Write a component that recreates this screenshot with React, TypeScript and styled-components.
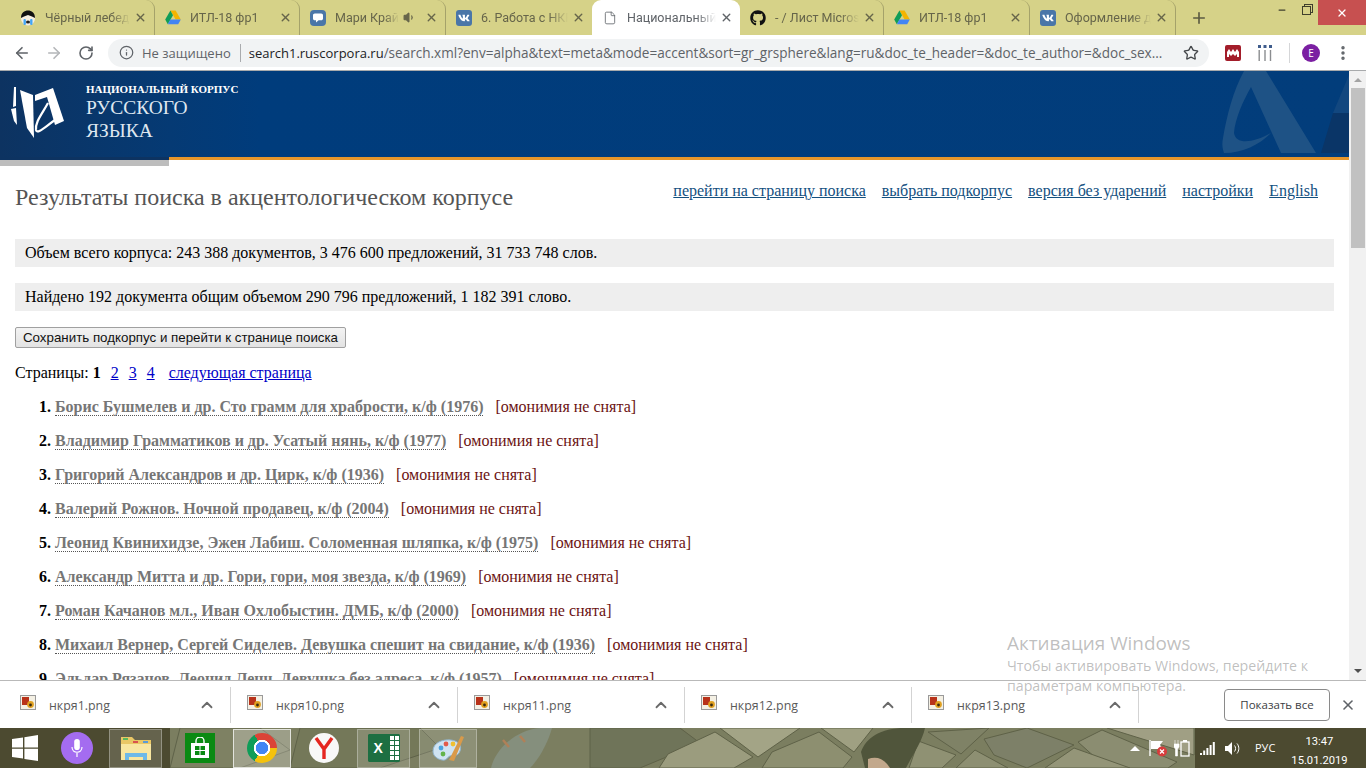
import React from 'react';
import styled, { createGlobalStyle } from 'styled-components';
import { FaGithub, FaVk } from 'react-icons/fa';
import {
  ArrowLeft,
  ArrowRight,
  ChevronUp,
  EllipsisVertical,
  File,
  Info,
  Minus,
  Plus,
  RotateCw,
  Star,
  Volume1,
  X
} from 'lucide-react';

const UI_FONT = '"Open Sans", "Noto Sans", sans-serif';
const TAB_FONT = 'Roboto, "Noto Sans", sans-serif';
const SERIF = '"Liberation Serif", "Times New Roman", serif';

const GlobalStyle = createGlobalStyle`
  html, body { margin: 0; padding: 0; height: 100%; overflow: hidden; background: #fff; }
  * { box-sizing: border-box; }
`;

const Screen = styled.div`
  position: relative;
  width: 1366px;
  height: 768px;
  display: flex;
  flex-direction: column;
  overflow: hidden;
  font-family: ${SERIF};
`;

/* browser chrome */
const TabStrip = styled.div`
  height: 35px;
  flex: none;
  display: flex;
  padding-left: 10px;
  background: #d6d288;
  position: relative;
`;

const TabCell = styled.div<{ $active?: boolean; $width: number; $divider?: boolean }>`
  width: ${(p) => p.$width}px;
  height: 35px;
  flex: none;
  display: flex;
  align-items: center;
  padding: 0 7px 0 10px;
  gap: 9px;
  position: relative;
  border-radius: 9px 9px 0 0;
  background: ${(p) => (p.$active ? '#fff' : 'transparent')};
  color: ${(p) => (p.$active ? '#5f6368' : '#66654a')};
  border-right: ${(p) => (p.$divider ? '1px solid #a5a26a' : '0')};
  background-clip: padding-box;
`;

const TabTitle = styled.span`
  flex: 1;
  min-width: 0;
  margin-right: -5px;
  font: 12.5px/16px ${TAB_FONT};
  white-space: nowrap;
  overflow: hidden;
  -webkit-mask-image: linear-gradient(to right, #000 78%, transparent 100%);
  mask-image: linear-gradient(to right, #000 78%, transparent 100%);
`;

const FaviconSlot = styled.span`
  width: 16px;
  height: 16px;
  flex: none;
  display: flex;
  align-items: center;
  justify-content: center;
`;

const VkBadge = styled.span`
  width: 16px;
  height: 16px;
  border-radius: 3px;
  background: #4a76a8;
  color: #fff;
  display: flex;
  align-items: center;
  justify-content: center;
`;

const NewTab = styled.div`
  width: 46px;
  height: 35px;
  display: flex;
  align-items: center;
  justify-content: center;
  color: #5c5b42;
`;

const WindowControls = styled.div`
  position: absolute;
  top: 0;
  right: 0;
  display: flex;
  height: 25px;
`;

const WindowButton = styled.div<{ $close?: boolean; $width: number }>`
  width: ${(p) => p.$width}px;
  height: ${(p) => (p.$close ? 25 : 20)}px;
  display: flex;
  align-items: center;
  justify-content: center;
  background: ${(p) => (p.$close ? '#c75050' : 'transparent')};
  color: ${(p) => (p.$close ? '#fff' : '#3f3f2c')};
`;

const MaxIcon = styled.span`
  width: 9px;
  height: 9px;
  border: 1px solid #3f3f2c;
  box-shadow: 2px -2px 0 -1px #d6d288, 2px -2px 0 0 #3f3f2c;
`;

const Toolbar = styled.div`
  height: 35px;
  flex: none;
  display: flex;
  align-items: center;
  background: #fff;
  padding: 0 0 0 12px;
`;

const NavIcon = styled.span<{ $muted?: boolean }>`
  width: 20px;
  height: 20px;
  margin-right: 12px;
  display: flex;
  align-items: center;
  justify-content: center;
  color: ${(p) => (p.$muted ? '#b4b6b9' : '#5f6368')};
`;

const Omnibox = styled.div`
  width: 1101px;
  height: 28px;
  flex: none;
  display: flex;
  align-items: center;
  padding: 0 10px 0 11px;
  border-radius: 14px;
  background: #f1f3f4;
  font: 13px/18px ${UI_FONT};
  white-space: nowrap;
`;

const SecurityLabel = styled.span`
  color: #5f6368;
  margin-left: 8px;
`;

const OmniDivider = styled.span`
  width: 1px;
  height: 18px;
  margin: 0 8px 0 9px;
  background: #a9abae;
`;

const UrlHost = styled.span`
  color: #202124;
`;

const UrlPath = styled.span`
  flex: 1;
  color: #5f6368;
  font-size: 13.55px;
  overflow: hidden;
`;

const ToolbarTools = styled.div`
  display: flex;
  align-items: center;
  margin-left: 16px;
  flex: 1;
`;

const ToolDivider = styled.span`
  width: 1px;
  height: 20px;
  margin: 0 12px 0 16px;
  background: #d5d6d8;
`;

const ProfileBadge = styled.span`
  width: 18px;
  height: 18px;
  border-radius: 50%;
  background: #7b1fa2;
  color: #fff;
  font: 10px/18px ${UI_FONT};
  text-align: center;
`;

const ExtensionBadge = styled.span`
  width: 16px;
  height: 16px;
  border-radius: 2px;
  background: #a31d2a;
  margin-right: 16px;
  display: flex;
  align-items: center;
  justify-content: center;
`;

/* page */
const Viewport = styled.div`
  height: 610px;
  flex: none;
  display: flex;
  border-top: 1px solid #a8aaac;
  overflow: hidden;
`;

const Page = styled.main`
  width: 1349px;
  flex: none;
  color: #000;
  font: 16px/18px ${SERIF};
`;

const Banner = styled.header`
  position: relative;
  height: 86px;
  display: flex;
  overflow: hidden;
  background: linear-gradient(to right, #0d3361 0, #053a74 170px, #003c7c 260px, #023d7b 100%);
`;

const BannerMark = styled.svg`
  width: 80px;
  height: 70px;
  margin-top: 5px;
  flex: none;
`;

const BannerWatermark = styled.svg`
  position: absolute;
  right: 0;
  top: 0;
  width: 130px;
  height: 86px;
`;

const BannerTitle = styled.div`
  margin: 11px 0 0 6px;
  color: #fff;
  display: flex;
  flex-direction: column;
`;

const BannerSmall = styled.span`
  font: bold 11px/14px ${SERIF};
`;

const BannerLarge = styled.span`
  font: 19.5px/23px ${SERIF};
  color: #dfe7f0;
`;

const Stripe = styled.div`
  display: flex;
  align-items: flex-start;
`;

const StripeLeft = styled.div`
  width: 169px;
  height: 9px;
  background: linear-gradient(#0d3361 3px, #bdbdbd 3px);
`;

const StripeRight = styled.div`
  flex: 1;
  height: 3px;
  background: #e7962a;
`;

const Content = styled.div`
  padding: 0 15px;
`;

const TitleRow = styled.div`
  height: 73px;
  display: flex;
  justify-content: space-between;
  align-items: flex-start;
`;

const Title = styled.h1`
  margin: 18px 0 0;
  font: normal 24px/26px ${SERIF};
  color: #555;
`;

const TopNav = styled.nav`
  display: flex;
  gap: 16px;
  margin: 16px 16px 0 0;
`;

const TopLink = styled.a`
  color: #13507f;
  text-decoration: underline;
`;

const StatBox = styled.div`
  height: 28px;
  margin-bottom: 16px;
  padding: 5px 10px;
  background: #eee;
`;

const SaveButton = styled.button`
  display: block;
  width: 331px;
  height: 21px;
  padding: 0;
  border: 1px solid #a0a0a0;
  border-radius: 2px;
  background: linear-gradient(#f3f3f3, #e3e3e3);
  color: #111;
  font: 13.33px/18px "Liberation Sans", Arial, sans-serif;
`;

const Pager = styled.div`
  margin: 16px 0 8px;
  display: flex;
  align-items: baseline;
`;

const PagerCurrent = styled.b`
  margin: 0 10px 0 4px;
`;

const PagerLink = styled.a`
  color: #0000c8;
  text-decoration: underline;
  margin-right: 10px;
`;

const NextLink = styled(PagerLink)`
  margin-left: 4px;
`;

const DocList = styled.ol`
  list-style: none;
  margin: 0;
  padding: 0;
`;

const DocRow = styled.li`
  height: 34px;
  display: flex;
  align-items: center;
`;

const DocNumber = styled.b`
  width: 36px;
  text-align: right;
  margin-right: 4px;
  flex: none;
`;

const DocTitle = styled.a`
  font-weight: bold;
  color: #767676;
  border-bottom: 1px dotted #555;
  line-height: 16px;
`;

const DocNote = styled.span`
  margin-left: 12px;
  color: #6b1212;
`;

const Scrollbar = styled.div`
  width: 17px;
  flex: none;
  background: #f1f1f1;
  display: flex;
  flex-direction: column;
  align-items: center;
`;

const ScrollArrow = styled.span<{ $down?: boolean }>`
  margin-top: ${(p) => (p.$down ? 'auto' : '7px')};
  margin-bottom: ${(p) => (p.$down ? '7px' : '0')};
  width: 0;
  height: 0;
  border-left: 4px solid transparent;
  border-right: 4px solid transparent;
  border-bottom: ${(p) => (p.$down ? '0' : '4px solid #a3a3a3')};
  border-top: ${(p) => (p.$down ? '4px solid #505050' : '0')};
`;

const ScrollThumb = styled.span`
  width: 14px;
  height: 160px;
  margin-top: 6px;
  background: #c1c1c1;
`;

/* downloads */
const DownloadBar = styled.footer`
  height: 48px;
  flex: none;
  display: flex;
  align-items: center;
  background: #fff;
  border-top: 1px solid #b9b9b9;
  padding-left: 4px;
`;

const DownloadItem = styled.div`
  width: 227px;
  height: 36px;
  flex: none;
  display: flex;
  align-items: center;
  padding: 0 14px 0 16px;
  border-right: 1px solid #d3d3d3;
  color: #5a5a5a;
`;

const FileName = styled.span`
  flex: 1;
  margin: 2px 0 0 13px;
  font: 12.4px/16px ${UI_FONT};
`;

const ImageGlyph = styled.svg`
  width: 16px;
  height: 15px;
  flex: none;
  margin-top: -4px;
`;

const ShowAll = styled.button`
  width: 106px;
  height: 32px;
  margin-left: 85px;
  padding: 0;
  border: 1px solid #8a8a8a;
  border-radius: 4px;
  background: #fff;
  color: #3c4043;
  font: 11.5px/16px ${UI_FONT};
`;

const BarClose = styled.span`
  width: 36px;
  display: flex;
  justify-content: center;
  color: #5f6368;
`;

/* windows taskbar */
const Taskbar = styled.div`
  position: relative;
  height: 40px;
  flex: none;
  display: flex;
  align-items: center;
  overflow: hidden;
  background: #7b7e60;
`;

const Pavement = styled.svg`
  position: absolute;
  inset: 0;
  width: 1366px;
  height: 40px;
`;

const TaskSide = styled.div<{ $width: number }>`
  position: relative;
  width: ${(p) => p.$width}px;
  height: 40px;
  flex: none;
  display: flex;
  align-items: center;
  background: rgb(76, 74, 48);
`;

const TaskMiddle = styled.div`
  position: relative;
  flex: 1;
  height: 40px;
  display: flex;
  align-items: center;
`;

const StartSlot = styled.svg`
  width: 26px;
  height: 26px;
  margin: 0 23px 0 12px;
`;

const Cortana = styled.span`
  width: 32px;
  height: 32px;
  border-radius: 50%;
  background: #a46cf0;
  color: #fff;
  margin-right: 16px;
  display: flex;
  align-items: center;
  justify-content: center;
`;

const TaskTile = styled.div<{ $width: number; $strong?: boolean; $offset?: number }>`
  width: ${(p) => p.$width}px;
  height: 39px;
  margin-left: ${(p) => p.$offset ?? 0}px;
  flex: none;
  display: flex;
  align-items: center;
  justify-content: center;
  background: rgba(255, 255, 255, ${(p) => (p.$strong ? 0.25 : 0.14)});
  border: 1px solid rgba(255, 255, 255, ${(p) => (p.$strong ? 0.7 : 0.3)});
`;

const ChromeBall = styled.span`
  width: 30px;
  height: 30px;
  border-radius: 50%;
  background:
    radial-gradient(circle, #4285f4 0 6px, #fff 6.5px 8px, transparent 8.5px),
    conic-gradient(#db4437 0 90deg, #f4c20d 90deg 210deg, #0f9d58 210deg 330deg, #db4437 330deg);
`;

const YandexBall = styled.span`
  width: 30px;
  height: 30px;
  margin: 0 18px;
  border-radius: 50%;
  background: #f8f8f8;
  display: flex;
  align-items: center;
  justify-content: center;
`;

const StoreSquare = styled.span`
  width: 30px;
  height: 30px;
  margin-left: 15px;
  margin-right: 18px;
  background: #0a8a12;
  display: flex;
  align-items: center;
  justify-content: center;
`;

const ExcelMark = styled.span`
  width: 32px;
  height: 28px;
  border-radius: 1px;
  background:
    linear-gradient(to right, #1d6f42 0 20px, transparent 20px),
    repeating-linear-gradient(#1d6f42 0 1px, transparent 1px 5px),
    repeating-linear-gradient(to right, #1d6f42 0 1px, #fff 1px 5px);
  border: 1px solid #1d6f42;
  color: #fff;
  font: bold 14px/26px "Liberation Sans", sans-serif;
  padding-left: 5px;
`;

const TraySlot = styled.div`
  position: absolute;
  right: 5px;
  top: 0;
  height: 40px;
  display: flex;
  align-items: center;
  gap: 6px;
`;

const TrayIcons = styled.div`
  width: 171px;
  height: 40px;
  display: flex;
  align-items: center;
  padding-left: 5px;
  gap: 10px;
  color: #fff;
`;

const TrayLang = styled.span`
  margin-left: 3px;
  font: 11px/16px ${UI_FONT};
`;

const TrayClock = styled.span`
  margin: 5px 0 0 6px;
  color: #fff;
  font: 11.2px/19px ${TAB_FONT};
  text-align: center;
  display: flex;
  flex-direction: column;
`;

/* activation overlay */
const Activation = styled.div`
  position: absolute;
  left: 1007px;
  top: 630px;
  width: 340px;
  color: rgba(120, 120, 120, 0.48);
  font: 14.2px/20px ${UI_FONT};
  pointer-events: none;
  white-space: nowrap;
`;

const ActivationTitle = styled.div`
  font-size: 18.9px;
  line-height: 26px;
`;

const DriveIcon = () => (
  <svg width="16" height="15" viewBox="0 0 16 15">
    <path d="M5.4 0.5h5.2l5.2 9h-5.2z" fill="#f4b400" />
    <path d="M5.4 0.5L0.2 9.5l2.6 4.8 5.2-9z" fill="#0f9d58" />
    <path d="M2.8 14.3h10.4l2.6-4.8H5.4z" fill="#4285f4" />
  </svg>
);

const FaceIcon = () => (
  <svg width="16" height="16" viewBox="0 0 16 16">
    <circle cx="8" cy="8.5" r="7" fill="#f6eee0" />
    <path d="M1 8C1 2.5 4.5 0.5 8 0.5s7 2 7 7.5L12 6.5 8 5 4 6.5z" fill="#111" />
    <rect x="3.5" y="9" width="2.4" height="6" rx="1" fill="#42a5f5" />
    <rect x="10.1" y="9" width="2.4" height="6" rx="1" fill="#42a5f5" />
    <ellipse cx="8" cy="12" rx="2" ry="1.6" fill="#222" />
  </svg>
);

const MessengerIcon = () => (
  <svg width="16" height="16" viewBox="0 0 16 16">
    <rect width="16" height="16" rx="4" fill="#4a76a8" />
    <path d="M4.8 3.5h6.4c1 0 1.8.8 1.8 1.8v3.2c0 1-.8 1.8-1.8 1.8H8.6L6 12.5v-2.2H4.8C3.8 10.3 3 9.5 3 8.5V5.3c0-1 .8-1.8 1.8-1.8z" fill="#fff" />
  </svg>
);

const VkIcon = () => (
  <VkBadge>
    <FaVk size={12} />
  </VkBadge>
);

const CloseIcon = () => <X size={13} strokeWidth={2.6} style={{ flex: 'none' }} />;

interface TabData {
  title: string;
  icon: React.ReactNode;
  width: number;
  active?: boolean;
  divider?: boolean;
  audio?: boolean;
}

const tabs: TabData[] = [
  { title: 'Чёрный лебедь', icon: <FaceIcon />, width: 145, divider: true },
  { title: 'ИТЛ-18 фр1', icon: <DriveIcon />, width: 145, divider: true },
  { title: 'Мари Край', icon: <MessengerIcon />, width: 146, divider: true, audio: true },
  { title: '6. Работа с НКРЯ', icon: <VkIcon />, width: 146 },
  { title: 'Национальный', icon: <File size={14} strokeWidth={1.4} />, width: 148, active: true },
  { title: '- / Лист Microsoft', icon: <FaGithub size={16} color="#111" />, width: 144, divider: true },
  { title: 'ИТЛ-18 фр1', icon: <DriveIcon />, width: 146, divider: true },
  { title: 'Оформление д', icon: <VkIcon />, width: 146, divider: true }
];

const docs = [
  'Борис Бушмелев и др. Сто грамм для храбрости, к/ф (1976)',
  'Владимир Грамматиков и др. Усатый нянь, к/ф (1977)',
  'Григорий Александров и др. Цирк, к/ф (1936)',
  'Валерий Рожнов. Ночной продавец, к/ф (2004)',
  'Леонид Квинихидзе, Эжен Лабиш. Соломенная шляпка, к/ф (1975)',
  'Александр Митта и др. Гори, гори, моя звезда, к/ф (1969)',
  'Роман Качанов мл., Иван Охлобыстин. ДМБ, к/ф (2000)',
  'Михаил Вернер, Сергей Сиделев. Девушка спешит на свидание, к/ф (1936)',
  'Эльдар Рязанов, Леонид Ленч. Девушка без адреса, к/ф (1957)'
];

const downloads = ['нкря1.png', 'нкря10.png', 'нкря11.png', 'нкря12.png', 'нкря13.png'];

const navLinks = [
  'перейти на страницу поиска',
  'выбрать подкорпус',
  'версия без ударений',
  'настройки',
  'English'
];

// wallpaper paving stones behind the taskbar
const stones = [
  { points: '180,0 260,0 290,22 240,40 170,40', fill: '#7e8163' },
  { points: '300,0 420,0 440,20 380,40 290,40', fill: '#747859' },
  { points: '590,0 680,0 700,15 640,40 590,40', fill: '#6f7459' },
  { points: '668,26 715,4 753,29 734,40 659,40', fill: '#9b9c7e' },
  { points: '720,0 800,0 758,29', fill: '#a3a486' },
  { points: '772,24 819,4 852,29 843,40 762,40', fill: '#8d8f70' },
  { points: '821,0 873,0 854,24', fill: '#9fa082' },
  { points: '913,11 956,27 942,40 909,40 918,14', fill: '#8f9173' },
  { points: '928,4 989,0 961,26', fill: '#7f8266' },
  { points: '984,11 1027,0 1074,17 1027,40 994,27', fill: '#7d8068' },
  { points: '1078,14 1102,2 1177,34 1168,40 1107,40', fill: '#8b8d71' },
  { points: '1107,0 1194,0 1194,27', fill: '#a09f84' },
  { points: '956,40 975,22 1008,40', fill: '#8d8f72' },
  { points: '1045,40 1074,20 1130,40', fill: '#949578' }
];

export default function App() {
  return (
    <Screen>
      <GlobalStyle />

      <TabStrip>
        {tabs.map((tab) => (
          <TabCell key={tab.title + tab.width} $width={tab.width} $active={tab.active} $divider={tab.divider}>
            <FaviconSlot>{tab.icon}</FaviconSlot>
            <TabTitle>{tab.title}</TabTitle>
            {tab.audio && <Volume1 size={13} fill="currentColor" />}
            <CloseIcon />
          </TabCell>
        ))}
        <NewTab>
          <Plus size={18} strokeWidth={2.2} />
        </NewTab>
        <WindowControls>
          <WindowButton $width={24}>
            <Minus size={10} strokeWidth={3} />
          </WindowButton>
          <WindowButton $width={24}>
            <MaxIcon />
          </WindowButton>
          <WindowButton $width={48} $close>
            <X size={12} strokeWidth={2.6} />
          </WindowButton>
        </WindowControls>
      </TabStrip>

      <Toolbar>
        <NavIcon>
          <ArrowLeft size={18} strokeWidth={2.2} />
        </NavIcon>
        <NavIcon $muted>
          <ArrowRight size={18} strokeWidth={2.2} />
        </NavIcon>
        <NavIcon>
          <RotateCw size={16} strokeWidth={2.4} />
        </NavIcon>
        <Omnibox>
          <Info size={15} color="#5f6368" strokeWidth={2} />
          <SecurityLabel>Не защищено</SecurityLabel>
          <OmniDivider />
          <UrlHost>search1.ruscorpora.ru</UrlHost>
          <UrlPath>/search.xml?env=alpha&amp;text=meta&amp;mode=accent&amp;sort=gr_grsphere&amp;lang=ru&amp;doc_te_header=&amp;doc_te_author=&amp;doc_sex...</UrlPath>
          <Star size={16} color="#44474a" strokeWidth={2} />
        </Omnibox>
        <ToolbarTools>
          <ExtensionBadge>
            <svg width="12" height="8" viewBox="0 0 12 8">
              <path d="M0 8V3l2-3 2 3 2-3 2 3 2-3 2 3v5h-2V5L8 7 6 5 4 7 2 5v3z" fill="#fff" />
            </svg>
          </ExtensionBadge>
          <svg width="16" height="18" viewBox="0 0 16 18">
            <g fill="#3f5c8c">
              <rect x="1" y="1" width="3" height="3" />
              <rect x="6.5" y="1" width="3" height="3" />
              <rect x="12" y="1" width="3" height="3" />
            </g>
            <g fill="#8b8d90">
              <rect x="1.5" y="6" width="1.4" height="11" />
              <rect x="7.3" y="6" width="1.4" height="11" />
              <rect x="12.8" y="6" width="1.4" height="11" />
            </g>
          </svg>
          <ToolDivider />
          <ProfileBadge>E</ProfileBadge>
          <EllipsisVertical size={18} color="#5f6368" strokeWidth={2.6} style={{ marginLeft: 14 }} />
        </ToolbarTools>
      </Toolbar>

      <Viewport>
        <Page>
          <Banner>
            <BannerMark viewBox="0 0 80 70">
              <path d="M14 11l2 0 0 19-3 1zM11 33l5-1 1 17-3-4z" fill="#fff" />
              <path d="M20 14l13 5 1 43-7-10z" fill="#fff" />
              <path d="M35 19L53 12 64 45 55 49 47 21 35 25z" fill="#fff" />
              <path d="M48 27C42 38 35 46 36 54C37 59 46 50 55 44" stroke="#fff" strokeWidth="2.2" fill="none" />
            </BannerMark>
            <BannerTitle>
              <BannerSmall>НАЦИОНАЛЬНЫЙ КОРПУС</BannerSmall>
              <BannerLarge>РУССКОГО</BannerLarge>
              <BannerLarge>ЯЗЫКА</BannerLarge>
            </BannerTitle>
            <BannerWatermark viewBox="0 0 130 86">
              <path d="M25 0H47L97 82H62L32 16C24 30 16 48 15 62C17 74 34 72 52 62C40 74 24 82 5 82C3 76 3 72 4 67C8 44 14 20 25 0Z" fill="#1e5285" />
              <path d="M130 4L114 42H130z" fill="#12477f" />
              <path d="M114 42H130V82H102z" fill="#0a3567" />
            </BannerWatermark>
          </Banner>
          <Stripe>
            <StripeLeft />
            <StripeRight />
          </Stripe>

          <Content>
            <TitleRow>
              <Title>Результаты поиска в акцентологическом корпусе</Title>
              <TopNav>
                {navLinks.map((label) => (
                  <TopLink key={label}>{label}</TopLink>
                ))}
              </TopNav>
            </TitleRow>

            <StatBox>Объем всего корпуса: 243 388 документов, 3 476 600 предложений, 31 733 748 слов.</StatBox>
            <StatBox>Найдено 192 документа общим объемом 290 796 предложений, 1 182 391 слово.</StatBox>

            <SaveButton>Сохранить подкорпус и перейти к странице поиска</SaveButton>

            <Pager>
              Страницы:
              <PagerCurrent>1</PagerCurrent>
              <PagerLink>2</PagerLink>
              <PagerLink>3</PagerLink>
              <PagerLink>4</PagerLink>
              <NextLink>следующая страница</NextLink>
            </Pager>

            <DocList>
              {docs.map((doc, i) => (
                <DocRow key={doc}>
                  <DocNumber>{i + 1}.</DocNumber>
                  <DocTitle>{doc}</DocTitle>
                  <DocNote>[омонимия не снята]</DocNote>
                </DocRow>
              ))}
            </DocList>
          </Content>
        </Page>
        <Scrollbar>
          <ScrollArrow />
          <ScrollThumb />
          <ScrollArrow $down />
        </Scrollbar>
      </Viewport>

      <DownloadBar>
        {downloads.map((name) => (
          <DownloadItem key={name}>
            <ImageGlyph viewBox="0 0 16 15">
              <rect x="0.5" y="0.5" width="15" height="14" fill="#f4f0e4" stroke="#9a9a9a" />
              <rect x="2" y="2" width="7" height="8" fill="#b8321a" />
              <circle cx="10.5" cy="9.5" r="3.4" fill="#e0a020" />
              <circle cx="10.5" cy="10" r="1.4" fill="#3a2a10" />
            </ImageGlyph>
            <FileName>{name}</FileName>
            <ChevronUp size={18} color="#6a6a6a" strokeWidth={2.4} />
          </DownloadItem>
        ))}
        <ShowAll>Показать все</ShowAll>
        <BarClose>
          <X size={16} strokeWidth={2.4} />
        </BarClose>
      </DownloadBar>

      <Taskbar>
        <Pavement viewBox="0 0 1366 40">
          {stones.map((stone) => (
            <polygon key={stone.points} points={stone.points} fill={stone.fill} stroke="#5f6248" strokeWidth="1" />
          ))}
          {/* shoe and sandal in the wallpaper */}
          <path d="M491 40C495 22 515 2 540 0H552C548 14 540 30 530 40z" fill="#858f7d" />
          <path d="M503 12L509 19M520 8L525 14" stroke="#b08058" strokeWidth="2.5" />
          <path d="M861 24C866 10 880 0 905 0H925C922 14 912 28 906 40H865z" fill="#50553b" />
          <path d="M868 31C876 28 884 30 890 40H868z" fill="#c2a88c" />
        </Pavement>

        <TaskSide $width={170}>
          <StartSlot viewBox="0 0 26 26">
            <path d="M0 4l11-1.6V12.4H0zM12.4 2.2L26 0v12.4H12.4zM0 13.8h11v9.8L0 22zM12.4 13.8H26V26l-13.6-2z" fill="#fff" />
          </StartSlot>
          <Cortana>
            <svg width="12" height="20" viewBox="0 0 12 20">
              <rect x="3.2" y="1" width="5.6" height="11" rx="2.8" fill="#fff" />
              <path d="M1 9c0 7 10 7 10 0M6 15v4" stroke="#fff" strokeWidth="1.2" fill="none" />
            </svg>
          </Cortana>
          <TaskTile $width={53}>
            <svg width="32" height="28" viewBox="0 0 32 28">
              <path d="M1 3h11l3 3h16v20H1z" fill="#e9c766" />
              <path d="M1 10h30v16H1z" fill="#f8e6a0" />
              <rect x="3" y="4" width="5" height="2" fill="#5cb85c" />
              <rect x="13" y="7" width="5" height="2" fill="#d9534f" />
              <rect x="23" y="7" width="5" height="2" fill="#5b9bd5" />
              <path d="M5 26v-7h22v7h-4v-3H9v3z" fill="#6db9e8" />
            </svg>
          </TaskTile>
        </TaskSide>

        <TaskMiddle>
          <StoreSquare>
            <svg width="20" height="22" viewBox="0 0 20 22">
              <path d="M6 6V4a4 4 0 0 1 8 0v2" stroke="#fff" fill="none" strokeWidth="1.4" />
              <path d="M1 6h18v15H1z" fill="#fff" />
              <path d="M5 9h4.5v4H5zM10.5 9H15v4h-4.5zM5 14h4.5v4H5zM10.5 14H15v4h-4.5z" fill="#0a8a12" />
            </svg>
          </StoreSquare>
          <TaskTile $width={58} $strong>
            <ChromeBall />
          </TaskTile>
          <YandexBall>
            <svg width="20" height="24" viewBox="0 0 20 24">
              <path d="M2 2l8 11 8-11M10 13v10" stroke="#e52620" strokeWidth="3.4" fill="none" />
            </svg>
          </YandexBall>
          <TaskTile $width={53}>
            <ExcelMark>X</ExcelMark>
          </TaskTile>
          <TaskTile $width={58} $offset={9}>
            <svg width="34" height="30" viewBox="0 0 34 30">
              <path d="M2 18C2 10 11 6 20 7c8 1 11 6 9 11-2 6-7 4-10 5-3 1-3 5-8 4-5-1-9-4-9-9z" fill="#cfe3f2" stroke="#8fb3cc" />
              <circle cx="10" cy="15" r="2.4" fill="#4aa3df" />
              <circle cx="15" cy="11" r="2.4" fill="#e25b4a" />
              <circle cx="22" cy="11" r="2.4" fill="#f0c030" />
              <circle cx="12" cy="21" r="2.4" fill="#63b34a" />
              <path d="M18 27L30 3l3 1-10 24z" fill="#d99a4a" />
            </svg>
          </TaskTile>
          <TraySlot>
            <svg width="10" height="6" viewBox="0 0 10 6" style={{ marginRight: 2 }}>
              <path d="M0 6l5-5 5 5z" fill="#fff" />
            </svg>
            <svg width="20" height="18" viewBox="0 0 20 18">
              <path d="M2 1v16" stroke="#fff" strokeWidth="1.4" />
              <path d="M3 2h12l-3 4 3 4H3z" fill="#fff" />
              <circle cx="14" cy="12.5" r="5" fill="#d83b3b" />
              <path d="M12 10.5l4 4m0-4l-4 4" stroke="#fff" strokeWidth="1.2" />
            </svg>
            <svg width="16" height="18" viewBox="0 0 16 18">
              <path d="M1 1v4M4 1v4M0 5h5v3L3.5 10v7h-2v-7L0 8z" fill="#fff" stroke="#fff" strokeWidth="0.6" />
              <rect x="7" y="3" width="8" height="14" fill="none" stroke="#fff" strokeWidth="1.3" />
              <rect x="9" y="1" width="4" height="2" fill="#fff" />
            </svg>
          </TraySlot>
        </TaskMiddle>

        <TaskSide $width={171}>
          <TrayIcons>
            <svg width="15" height="13" viewBox="0 0 15 13">
              <path d="M0 11h2v2H0zM3.2 8.5h2V13h-2zM6.4 6h2v7h-2zM9.6 3h2v10h-2zM12.8 0h2v13h-2z" fill="#fff" />
            </svg>
            <svg width="17" height="15" viewBox="0 0 17 15">
              <path d="M0 5h3l4-4v13l-4-4H0z" fill="#fff" />
              <path d="M9.5 4.5c1.4 1.6 1.4 4.4 0 6M12 2.5c2.4 2.8 2.4 7.2 0 10" stroke="#fff" fill="none" />
            </svg>
            <TrayLang>РУС</TrayLang>
            <TrayClock>
              <span>13:47</span>
              <span>15.01.2019</span>
            </TrayClock>
          </TrayIcons>
        </TaskSide>
      </Taskbar>

      <Activation>
        <ActivationTitle>Активация Windows</ActivationTitle>
        <div>Чтобы активировать Windows, перейдите к</div>
        <div>параметрам компьютера.</div>
      </Activation>
    </Screen>
  );
}
